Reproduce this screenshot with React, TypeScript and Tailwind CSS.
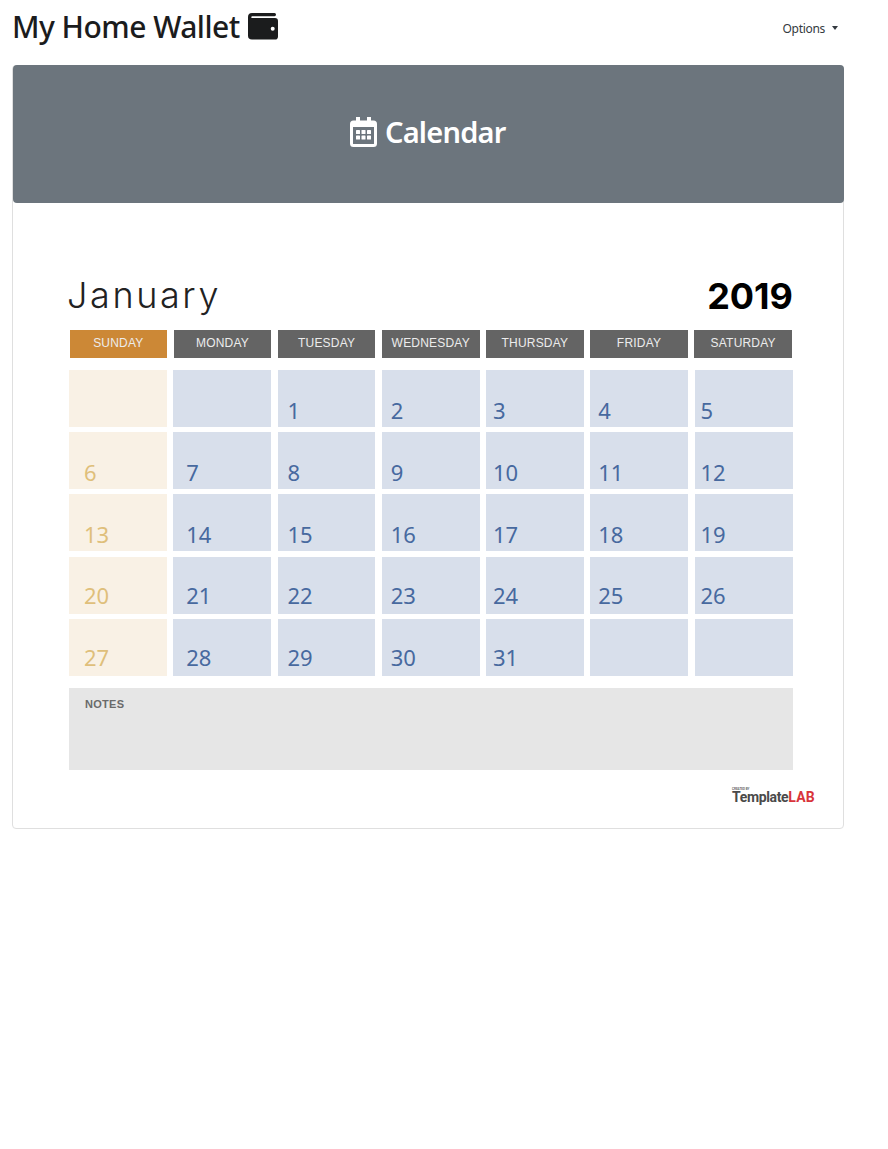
const weekdays = [
  "SUNDAY",
  "MONDAY",
  "TUESDAY",
  "WEDNESDAY",
  "THURSDAY",
  "FRIDAY",
  "SATURDAY",
];

// Left inset of the day numbers in each column.
const insets = [
  "pl-[15px]",
  "pl-[13px]",
  "pl-[10px]",
  "pl-[9px]",
  "pl-[7px]",
  "pl-[8px]",
  "pl-[6px]",
];

const cells = Array.from({ length: 35 }, (_, i) =>
  i >= 2 && i < 33 ? String(i - 1) : "",
);

function WalletIcon() {
  return (
    <svg viewBox="0 0 30 27" className="mt-[8px] h-[27px] w-[30px]" aria-hidden="true">
      <path
        fill="currentColor"
        fillRule="evenodd"
        d="M4 0h22.500Q28 0 28 1.600T26.500 3.300H4.200a.9.900 0 0 0 0 1.800H27Q30 5.100 30 8v15.500Q30 26.600 27 26.600H4Q0 26.600 0 22.800V4Q0 0 4 0zM24.700 13.700a2 2 0 1 0 0 4 2 2 0 0 0 0-4z"
      />
    </svg>
  );
}

function Header() {
  return (
    <header className="flex h-[65px] items-start justify-between">
      <h1 className="flex pt-[5px] text-[30px] leading-[43px] font-medium text-[#1b1c1d]">
        <span className="w-[236px] tracking-[-0.53px] whitespace-nowrap">
          My Home Wallet
        </span>
        <WalletIcon />
      </h1>
      <button className="mt-[19px] mr-[6px] flex items-center gap-[7px] text-[12px] leading-[20px] tracking-[-0.3px] text-[#343a40]">
        Options
        <span className="-mt-[2px] border-x-[3.5px] border-t-[4px] border-x-transparent border-t-[#343a40]" />
      </button>
    </header>
  );
}

function CalendarIcon() {
  return (
    <svg viewBox="0 0 27 30" className="h-[30px] w-[27px]" aria-hidden="true">
      <rect x="1.5" y="5" width="24" height="23.5" rx="2" fill="none" stroke="currentColor" strokeWidth="3" />
      <path d="M2 5h23v5H2zM6 0h4v6H6zM17 0h4v6h-4z" fill="currentColor" />
      <g fill="currentColor">
        <rect x="6" y="13" width="4" height="4" rx="0.6" />
        <rect x="11.5" y="13" width="4" height="4" rx="0.6" />
        <rect x="17" y="13" width="4" height="4" rx="0.6" />
        <rect x="6" y="18.5" width="4" height="4" rx="0.6" />
        <rect x="11.5" y="18.5" width="4" height="4" rx="0.6" />
        <rect x="17" y="18.5" width="4" height="4" rx="0.6" />
      </g>
    </svg>
  );
}

function MonthSheet() {
  return (
    <section className="pt-[73px] pr-[26px] pl-[56px]">
      <div className="mr-[24px] flex h-[54px] justify-between whitespace-nowrap">
        <h3 className="-ml-[2px] font-[Inter,sans-serif] text-[36px] leading-[39px] font-light tracking-[2.6px] text-[#222]">
          January
        </h3>
        <span className="font-[Inter,sans-serif] text-[36px] leading-[40px] font-bold text-black">
          2019
        </span>
      </div>
      <div className="ml-[0.5px] grid w-[722.5px] grid-cols-7 gap-x-[6.5px]">
        {weekdays.map((day, i) => (
          <div
            key={day}
            className={`flex h-[27.5px] items-center justify-center pb-[1px] font-['Liberation_Sans',sans-serif] text-[12px] tracking-[0.2px] text-[#ececec] ${
              i === 0 ? "bg-[#cc8836]" : "bg-[#646464]"
            }`}
          >
            {day}
          </div>
        ))}
      </div>
      <div className="mt-[12.5px] grid w-[723.5px] grid-cols-7 grid-rows-[repeat(5,57px)] gap-x-[6.3px] gap-y-[5.2px]">
        {cells.map((day, i) => (
          <div
            key={i}
            className={`text-[22px] leading-[31px] ${
              i < 21 ? "pt-[25px]" : "pt-[23px]"
            } ${insets[i % 7]} ${
              i % 7 === 0
                ? "bg-[#f9f1e5] text-[#dfbf7b]"
                : "bg-[#d8dfeb] text-[#47699f]"
            }`}
          >
            {day}
          </div>
        ))}
      </div>
      <div className="mt-[12px] h-[82px] w-[723.5px] bg-[#e6e6e6] pt-[9px] pl-[16px] font-['Liberation_Sans',sans-serif] text-[11px] leading-[14px] font-bold tracking-[0.3px] text-[#6a6a6a]">
        NOTES
      </div>
      <footer className="mt-[18px] flex flex-col items-end font-['Roboto',sans-serif] font-bold">
        <div className="w-[85px] text-[3px] leading-[3px] text-[#666]">
          CREATED BY
        </div>
        <div className="-mt-px w-[85px] text-[14px] leading-[15px] tracking-[-0.35px] whitespace-nowrap text-[#4a4a4a]">
          Template
          <span className="tracking-[0.2px] text-[#d9343b]">LAB</span>
        </div>
      </footer>
    </section>
  );
}

export default function App() {
  return (
    <div className="min-h-[1149px] bg-white pr-[44px] pl-[12px] font-['Noto_Sans',sans-serif]">
      <Header />
      <main className="h-[764px] rounded-[4px] border border-[#dfdfdf]">
        <div className="-mr-px -mt-px flex h-[138px] items-center justify-center rounded-[4px] bg-[#6c757d] pr-px pb-[4px] text-white">
          <CalendarIcon />
          <h2 className="ml-[8px] w-[121px] text-[29px] leading-[40px] font-semibold tracking-[-0.8px] whitespace-nowrap">
            Calendar
          </h2>
        </div>
        <MonthSheet />
      </main>
    </div>
  );
}
